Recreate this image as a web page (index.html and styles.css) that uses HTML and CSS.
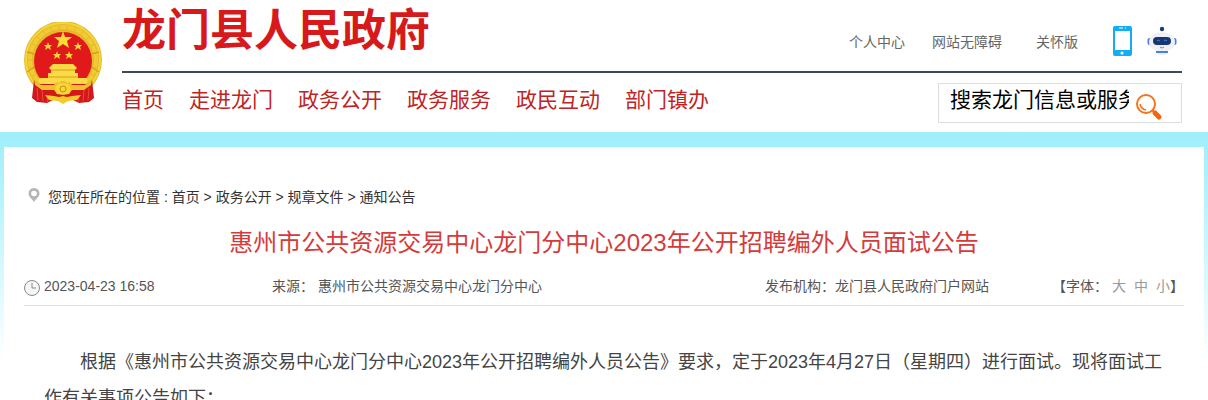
FILE: index.html
```html
<!DOCTYPE html>
<html lang="zh-CN">
<head>
    <meta charset="UTF-8">
    <meta name="viewport" content="width=device-width, initial-scale=1.0">
    <title>龙门县人民政府</title>
    <link rel="stylesheet" href="styles.css">
</head>
<body>

    <!-- 页头 -->
    <header class="header">
        <svg class="emblem" viewBox="0 0 78 84" aria-hidden="true">
            <circle cx="39" cy="38" r="39" fill="#e6b92a"/>
            <circle cx="39" cy="38" r="37" fill="none" stroke="#f4d53c" stroke-width="2"/>
            <circle cx="39" cy="38" r="33" fill="none" stroke="#f0cb35" stroke-width="4" stroke-dasharray="7 1"/>
            <path d="M3 50l9-6M75 50l-9-6M3 30l7 2M75 30l-7 2" stroke="#c9921c" stroke-width="1"/>
            <circle cx="39" cy="39" r="29" fill="#e01a1b"/>
            <path d="M39 9l2 6h7l-5 4 2 7-6-4-6 4 2-7-5-4h7z" fill="#fbdc36"/>
            <path id="star" d="M24 20l1 3h3l-2 2 1 3-3-2-3 2 1-3-2-2h3z" fill="#fbdc36"/>
            <use href="#star" x="30"/>
            <use href="#star" x="9" y="9"/>
            <use href="#star" x="21" y="9"/>
            <path d="M29 42h20l4 4-2 2v3h3v5h9l1 6H14l1-6h9v-5h3v-3l-2-2z" fill="#fadb45"/>
            <path d="M27 48h24M24 55h30" stroke="#d79d18" stroke-width="1"/>
            <path d="M10 58l6 4h46l6-4 2 18-5 4-10 1-6-3H29l-6 3-10-1-5-4z" fill="#d3171b"/>
            <path d="M13 66l1 12M18 68l1 11M23 74l1 6M65 66l-1 12M60 68l-1 11M55 74l-1 6" stroke="#ee4a32" stroke-width="1"/>
            <path d="M10 57l7 6h13l2-3 3 1 2-2h4l2 2 3-1 2 3h13l7-6-1 6-7 5H48l-3 4-6 1-6-1-3-4H18l-7-5z" fill="#edc02c"/>
            <path d="M31 67q1-6 8-6t8 6l-2 5H33z" fill="#f7d636"/>
            <circle cx="39" cy="67" r="3" fill="none" stroke="#c88a18"/>
            <path d="M21 73l9 1 5 1 4-1 4 1 5-1 9-1-4 5-9 1-5 3-5-3-9-1z" fill="#f3cb2b"/>
        </svg>

        <div class="header-main">
            <div class="header-top">
                <h1 class="site-title">龙门县人民政府</h1>
                <div class="tools">
                    <a href="#" class="tool-user">个人中心</a>
                    <a href="#" class="tool-access">网站无障碍</a>
                    <a href="#" class="tool-care">关怀版</a>
                    <a href="#" class="tool-phone" aria-label="手机版">
                        <svg width="20" height="30" viewBox="0 0 20 30">
                            <rect x="1" y="0" width="19" height="30" rx="2" fill="#14adf5"/>
                            <rect x="3" y="5" width="15" height="19" fill="#fff"/>
                            <path d="M7 2h4M13 2h1" stroke="#fff" stroke-width="1"/>
                            <circle cx="10" cy="27" r="1.500" fill="#fff"/>
                        </svg>
                    </a>
                    <a href="#" aria-label="智能问答">
                        <svg width="30" height="30" viewBox="0 0 30 30">
                            <path d="M15 3v6" stroke="#dfe3ea" stroke-width="1"/>
                            <circle cx="15" cy="3" r="2.200" fill="#1b3a78"/>
                            <rect x="0.500" y="12" width="4" height="7" rx="2" fill="#4c7ee0"/>
                            <rect x="25.500" y="12" width="4" height="7" rx="2" fill="#4c7ee0"/>
                            <ellipse cx="15" cy="16" rx="13" ry="10" fill="#eef0f4"/>
                            <path d="M8 24h14l-3 5h-8z" fill="#eef0f4"/>
                            <rect x="6" y="11" width="18" height="8" rx="4" fill="#17366f"/>
                            <path d="M10 15q1-2 3 0M17 15q2-2 3 0" stroke="#3f86e6" fill="none"/>
                            <path d="M13 21q2 2 4 0" stroke="#888" fill="none"/>
                            <path d="M9 26h12" stroke="#4c7ee0" stroke-width="2"/>
                        </svg>
                    </a>
                </div>
            </div>

            <div class="header-bottom">
                <nav class="nav">
                    <a href="#">首页</a>
                    <a href="#">走进龙门</a>
                    <a href="#">政务公开</a>
                    <a href="#">政务服务</a>
                    <a href="#">政民互动</a>
                    <a href="#">部门镇办</a>
                </nav>
                <form class="search">
                    <input type="text" class="search-input" aria-label="搜索" placeholder="搜索龙门信息或服务">
                    <button type="submit" class="search-button" aria-label="搜索">
                        <svg width="28" height="28" viewBox="0 0 28 28">
                            <circle cx="11" cy="11" r="9" fill="none" stroke="#f4731c" stroke-width="2"/>
                            <path d="M5 11q1 5 6 6" fill="none" stroke="#f4731c" stroke-width="1.500"/>
                            <path d="M17 17l3 3" stroke="#f4731c" stroke-width="2"/>
                            <path d="M20 20l4 4" stroke="#f4650d" stroke-width="5" stroke-linecap="round"/>
                        </svg>
                    </button>
                </form>
            </div>
        </div>
    </header>

    <!-- 正文 -->
    <div class="page">
        <main class="content">
            <div class="breadcrumb">
                <svg width="12" height="14" viewBox="0 0 12 14" aria-hidden="true">
                    <path d="M6 0a5.500 5.500 0 0 1 5.500 5.500C11.500 9 8 10.500 6 14 4 10.500.5 9 .5 5.500A5.500 5.500 0 0 1 6 0z" fill="#b5b5b5"/>
                    <circle cx="6" cy="5.500" r="2.800" fill="#fff"/>
                </svg>
                <span>您现在所在的位置 : <a href="#">首页</a> &gt; <a href="#">政务公开</a> &gt; <a href="#">规章文件</a> &gt; <a href="#">通知公告</a></span>
            </div>

            <h2 class="article-title">惠州市公共资源交易中心龙门分中心2023年公开招聘编外人员面试公告</h2>

            <div class="meta">
                <span class="meta-date">
                    <svg width="16" height="16" viewBox="0 0 16 16" aria-hidden="true">
                        <circle cx="8" cy="8" r="7.500" fill="#f6f6f6" stroke="#888"/>
                        <path d="M8 3v5h4" fill="none" stroke="#888"/>
                    </svg>
                    <time>2023-04-23 16:58</time>
                </span>
                <span>来源： 惠州市公共资源交易中心龙门分中心</span>
                <span>发布机构：龙门县人民政府门户网站</span>
                <span class="font-size">【字体： <span class="sizes"><a href="#">大</a><a href="#">中</a><a href="#">小</a></span>】</span>
            </div>

            <div class="article">
                <p>根据《惠州市公共资源交易中心龙门分中心2023年公开招聘编外人员公告》要求，定于2023年4月27日（星期四）进行面试。现将面试工作有关事项公告如下：</p>
            </div>
        </main>
    </div>

</body>
</html>
```

FILE: styles.css
```css
body {
    margin: 0;
    font-family: "Liberation Sans", "Noto Sans CJK SC", sans-serif;
    font-size: 14px;
    color: #555;
    background-color: #fff;
}
a {
    color: inherit;
    text-decoration: none;
}
svg {
    display: block;
}

/* 页头 */
.header {
    display: flex;
    gap: 20px;
    padding: 0 26px 9px 24px;
}
.emblem {
    flex: none;
    width: 78px;
    height: 84px;
    margin-top: 22px;
}
.header-main {
    flex: 1;
}
.header-top {
    display: flex;
    justify-content: space-between;
    height: 71px;
    border-bottom: 2px solid #3e4a56;
}
.site-title {
    margin: 0;
    font-size: 44px;
    line-height: 62px;
    color: #d7191b;
}
.tools {
    display: flex;
    align-items: center;
    padding: 11px 5px 0 0;
    color: #666;
}
.tool-user {
    margin-right: 27px;
}
.tool-access,
.tool-care {
    margin-right: 34px;
}
.tool-phone {
    margin-right: 15px;
}
.header-bottom {
    display: flex;
    justify-content: space-between;
    padding-top: 10px;
}
.nav {
    display: flex;
    gap: 25px;
    font-size: 21px;
    line-height: 34px;
    color: #bf2424;
}
.search {
    display: flex;
    box-sizing: border-box;
    width: 244px;
    height: 40px;
    padding-left: 11px;
    border: 1px solid #ddd;
}
.search-input {
    width: 179px;
    height: 32px;
    padding: 0;
    border: none;
    outline: none;
    background: none;
    font-family: inherit;
    font-size: 21px;
    color: #000;
}
.search-input::placeholder {
    color: #000;
}
.search-button {
    padding: 8px 0 0 6px;
    border: none;
    background: none;
    cursor: pointer;
}

/* 正文 */
.page {
    padding: 15px 4px 0;
    background: linear-gradient(#9feefc, #b3f3fd 60px, #fff 230px);
}
.content {
    padding: 39px 20px 0;
    background-color: #fff;
}
.breadcrumb {
    display: flex;
    gap: 8px;
    padding-left: 4px;
    line-height: 22px;
    color: #333;
}
.breadcrumb svg {
    margin-top: 2px;
}
.article-title {
    margin: 16px 0 0;
    font-size: 24px;
    font-weight: normal;
    line-height: 38px;
    text-align: center;
    color: #d43c3c;
}
.meta {
    display: grid;
    grid-template-columns: 248fr 493fr 287fr 132fr;
    padding: 14px 0 9px;
    border-bottom: 1px solid #e2e2e2;
    line-height: 20px;
    white-space: nowrap;
}
.meta-date {
    display: flex;
    gap: 4px;
}
.meta-date svg {
    margin-top: 4px;
}
.sizes {
    display: inline-flex;
    gap: 8px;
    color: #999;
}
.article {
    padding: 38px 20px 0;
    font-size: 18px;
    line-height: 36px;
    color: #444;
}
.article p {
    margin: 0;
    text-indent: 2em;
}
```
